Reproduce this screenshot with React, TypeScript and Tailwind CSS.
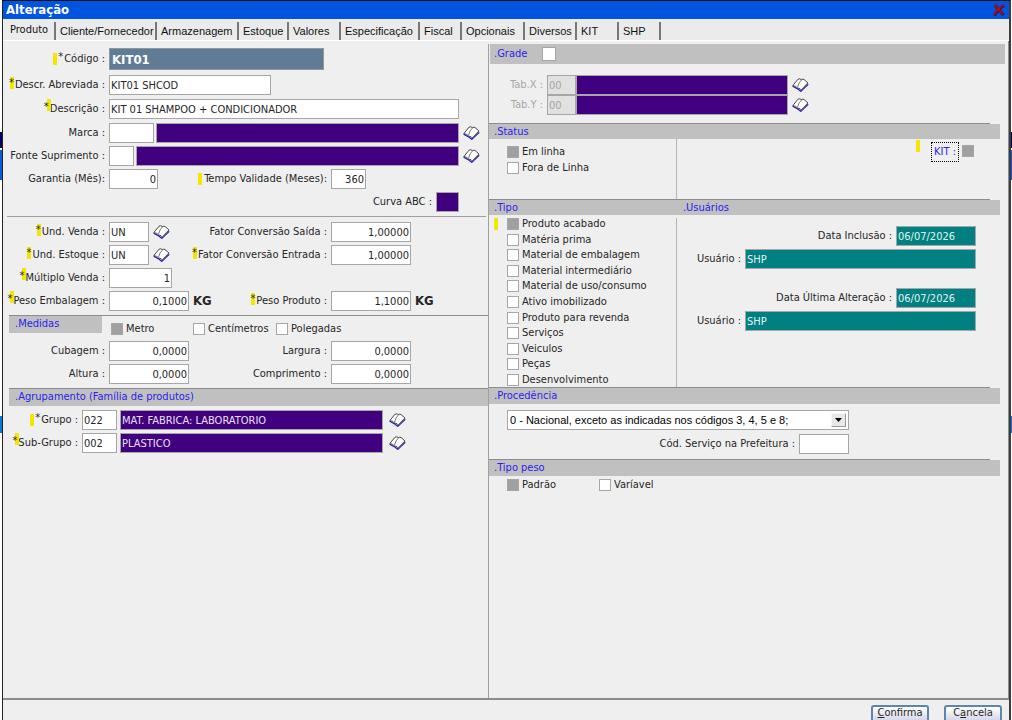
import { ReactNode, useState } from "react";
import clsx from "clsx";

const tabs = [
  { name: "Produto", width: "w-[53px]" },
  { name: "Cliente/Fornecedor", width: "w-[101px]" },
  { name: "Armazenagem", width: "w-[82px]" },
  { name: "Estoque", width: "w-[50px]" },
  { name: "Valores", width: "w-[52px]" },
  { name: "Especificação", width: "w-[79px]" },
  { name: "Fiscal", width: "w-[42px]" },
  { name: "Opcionais", width: "w-[63px]" },
  { name: "Diversos", width: "w-[52px]" },
  { name: "KIT", width: "w-[42px]" },
  { name: "SHP", width: "w-[42px]" },
];

const tipos = [
  "Produto acabado",
  "Matéria prima",
  "Material de embalagem",
  "Material intermediário",
  "Material de uso/consumo",
  "Ativo imobilizado",
  "Produto para revenda",
  "Serviços",
  "Veiculos",
  "Peças",
  "Desenvolvimento",
];

// required mark: asterisk plus a yellow highlight before, under or after it
const Star = ({ mark }: { mark: "before" | "under" | "after" }) => (
  <span className="relative inline-flex h-5 w-[7px] justify-center">
    <span
      className={clsx(
        "absolute h-3 w-1 bg-[#f5e600]",
        mark === "before" && "top-1 -left-1",
        mark === "under" && "top-0.5 left-0.5",
        mark === "after" && "top-0 left-1"
      )}
    />
    <span className="relative">*</span>
  </span>
);

const Label = ({
  id,
  children,
  className = "",
}: {
  id: string;
  children: ReactNode;
  className?: string;
}) => (
  <label
    htmlFor={id}
    className={clsx(
      "flex items-center justify-end whitespace-nowrap",
      className
    )}
  >
    {children}
  </label>
);

const Field = ({
  id,
  value = "",
  className = "",
  label,
}: {
  id: string;
  value?: string;
  className?: string;
  label?: string;
}) => (
  <input
    id={id}
    type="text"
    defaultValue={value}
    aria-label={label}
    className={clsx(
      "h-5 shrink-0 border border-[#a6a6a6] px-px outline-none",
      className
    )}
  />
);

const Check = ({
  id,
  label,
  checked,
  className = "",
}: {
  id: string;
  label: string;
  checked?: boolean;
  className?: string;
}) => (
  <div className={clsx("flex h-3 items-center gap-[3px]", className)}>
    <input
      id={id}
      type="checkbox"
      defaultChecked={checked}
      className="size-3 shrink-0 appearance-none border border-[#a6a6a6] bg-white checked:bg-[#a0a0a0]"
    />
    <label htmlFor={id} className="whitespace-nowrap">
      {label}
    </label>
  </div>
);

const BookButton = ({
  label,
  className = "",
}: {
  label: string;
  className?: string;
}) => (
  <button
    type="button"
    aria-label={label}
    className={clsx("h-3.5 w-[17px] shrink-0", className)}
  >
    <svg viewBox="0 0 17 14" className="h-3.5 w-[17px]">
      <path d="M.6 8.2 5.8 11 8.8 13.3 16.2 6.2" fill="none" stroke="#2020c8" strokeWidth="1.3" />
      <path
        d="M.8 7.6 6 1.2Q7.4.3 9.6 1.6 10.8.8 12 1.5L16 5 9.3 12Q8.4 10.2 5.6 10 3.6 7.8.8 7.6Z"
        fill="#fff"
        stroke="#333"
        strokeWidth=".9"
      />
      <path d="M9.8 1.6Q6.6 4.4 5.4 9.4" fill="none" stroke="#555" strokeWidth=".8" />
      <path d="M15.8 5.4 9.4 12.2" fill="none" stroke="#666" strokeWidth="1.2" />
    </svg>
  </button>
);

const Section = ({
  title,
  children,
  className = "h-4",
}: {
  title: string;
  children?: ReactNode;
  className?: string;
}) => (
  <div className="mr-2">
    <div className="mr-2.5 h-px bg-[#8c8c8c]" />
    <div
      className={clsx(
        "flex items-center bg-[#c0c0c0] pl-[5px] text-[#2a1ef0]",
        className
      )}
    >
      <h2>{title}</h2>
      {children}
    </div>
  </div>
);

const Row = ({ children }: { children: ReactNode }) => (
  <div className="flex h-5 items-center gap-1">{children}</div>
);

const Middle = ({ children }: { children: ReactNode }) => (
  <div className="flex h-5 w-[218px] shrink-0 items-center">{children}</div>
);

const Left = () => (
  <div className="pt-[7px]">
    <div className="flex items-center gap-1">
      <Label id="codigo" className="w-[102px]">
        <Star mark="before" />
        Código :
      </Label>
      <input
        id="codigo"
        type="text"
        defaultValue="KIT01"
        className="h-[22px] w-[215px] border border-[#8f979f] bg-[#5f7b96] px-0.5 text-[13px] font-bold text-white outline-none"
      />
    </div>
    <div className="mt-[5px] flex flex-col gap-1">
      <Row>
        <Label id="abrev" className="w-[102px]">
          <Star mark="under" />
          Descr. Abreviada :
        </Label>
        <Field id="abrev" value="KIT01 SHCOD" className="w-[162px] bg-white" />
      </Row>
      <Row>
        <Label id="descricao" className="w-[102px]">
          <Star mark="after" />
          Descrição :
        </Label>
        <Field
          id="descricao"
          value="KIT 01 SHAMPOO + CONDICIONADOR"
          className="w-[350px] bg-white"
        />
      </Row>
    </div>
    <div className="mt-1 flex flex-col gap-[3px]">
      <Row>
        <Label id="marca" className="w-[102px]">
          Marca :
        </Label>
        <div className="flex w-[350px] gap-0.5">
          <Field id="marca" className="w-[45px] bg-white" />
          <Field id="marcaNome" label="Nome da marca" className="min-w-0 flex-1 bg-[#400080] text-white" />
        </div>
        <BookButton label="Pesquisar marca" />
      </Row>
      <Row>
        <Label id="fonte" className="w-[102px]">
          Fonte Suprimento :
        </Label>
        <div className="flex w-[350px] gap-0.5">
          <Field id="fonte" className="w-[25px] bg-white" />
          <Field id="fonteNome" label="Nome da fonte" className="min-w-0 flex-1 bg-[#400080] text-white" />
        </div>
        <BookButton label="Pesquisar fonte" />
      </Row>
      <Row>
        <Label id="garantia" className="w-[102px]">
          Garantia (Mês):
        </Label>
        <Middle>
          <Field id="garantia" value="0" className="w-[49px] bg-white text-right" />
          <Label id="validade" className="ml-auto">
            <span className="mr-0.5 h-3 w-1 bg-[#f5e600]" />
            Tempo Validade (Meses):
          </Label>
        </Middle>
        <Field id="validade" value="360" className="w-[35px] bg-white text-right" />
      </Row>
      <div className="flex h-5 w-[456px] items-center justify-end gap-1">
        <Label id="curva">Curva ABC :</Label>
        <Field id="curva" className="w-[23px] bg-[#400080] text-white" />
      </div>
    </div>
    <div className="mt-1 mr-0.5 ml-1 h-px bg-[#a0a0a0]" />
    <div className="mt-[5px] flex flex-col gap-[3px]">
      <Row>
        <Label id="undVenda" className="w-[102px]">
          <Star mark="under" />
          Und. Venda :
        </Label>
        <Middle>
          <Field id="undVenda" value="UN" className="w-10 bg-white" />
          <BookButton label="Pesquisar unidade de venda" className="ml-1" />
          <Label id="fatorSaida" className="ml-auto">
            Fator Conversão Saída :
          </Label>
        </Middle>
        <Field id="fatorSaida" value="1,00000" className="w-20 bg-white text-right" />
      </Row>
      <Row>
        <Label id="undEstoque" className="w-[102px]">
          <Star mark="under" />
          Und. Estoque :
        </Label>
        <Middle>
          <Field id="undEstoque" value="UN" className="w-10 bg-white" />
          <BookButton label="Pesquisar unidade de estoque" className="ml-1" />
          <Label id="fatorEntrada" className="ml-auto">
            <Star mark="under" />
            Fator Conversão Entrada :
          </Label>
        </Middle>
        <Field id="fatorEntrada" value="1,00000" className="w-20 bg-white text-right" />
      </Row>
      <Row>
        <Label id="multiplo" className="w-[102px]">
          <Star mark="after" />
          Múltiplo Venda :
        </Label>
        <Field id="multiplo" value="1" className="w-[63px] bg-white text-right" />
      </Row>
      <Row>
        <Label id="pesoEmb" className="w-[102px]">
          <Star mark="after" />
          Peso Embalagem :
        </Label>
        <Middle>
          <Field id="pesoEmb" value="0,1000" className="w-20 bg-white text-right" />
          <b className="ml-1 text-[13px]">KG</b>
          <Label id="pesoProd" className="ml-auto">
            <Star mark="under" />
            Peso Produto :
          </Label>
        </Middle>
        <Field id="pesoProd" value="1,1000" className="w-20 bg-white text-right" />
        <b className="text-[13px]">KG</b>
      </Row>
    </div>
    <div className="mt-1 ml-1.5 h-px bg-[#8c8c8c]" />
    <div className="ml-1.5 flex h-[25px]">
      <h2 className="h-[17px] w-[93px] bg-[#c0c0c0] pl-1.5 leading-4 text-[#2a1ef0]">
        .Medidas
      </h2>
      <div className="ml-[9px] flex pt-[7px]">
        <Check id="metro" label="Metro" checked className="w-[82px]" />
        <Check id="centimetros" label="Centímetros" className="w-[83px]" />
        <Check id="polegadas" label="Polegadas" />
      </div>
    </div>
    <div className="flex flex-col gap-[3px]">
      <Row>
        <Label id="cubagem" className="w-[102px]">
          Cubagem :
        </Label>
        <Middle>
          <Field id="cubagem" value="0,0000" className="w-20 bg-white text-right" />
          <Label id="largura" className="ml-auto">
            Largura :
          </Label>
        </Middle>
        <Field id="largura" value="0,0000" className="w-20 bg-white text-right" />
      </Row>
      <Row>
        <Label id="altura" className="w-[102px]">
          Altura :
        </Label>
        <Middle>
          <Field id="altura" value="0,0000" className="w-20 bg-white text-right" />
          <Label id="comprimento" className="ml-auto">
            Comprimento :
          </Label>
        </Middle>
        <Field id="comprimento" value="0,0000" className="w-20 bg-white text-right" />
      </Row>
    </div>
    <div className="mt-1 ml-1.5 border-t border-[#8c8c8c]">
      <h2 className="h-[17px] bg-[#c0c0c0] pl-1.5 leading-4 text-[#2a1ef0]">
        .Agrupamento (Família de produtos)
      </h2>
    </div>
    <div className="mt-1 flex flex-col gap-[3px]">
      <Row>
        <Label id="grupo" className="w-[75px]">
          <Star mark="before" />
          Grupo :
        </Label>
        <div className="flex w-[301px] gap-[3px]">
          <Field id="grupo" value="022" className="w-[35px] bg-white" />
          <Field
            id="grupoNome"
            label="Nome do grupo"
            value="MAT. FABRICA: LABORATORIO"
            className="min-w-0 flex-1 bg-[#400080] text-[#e8e0f0]"
          />
        </div>
        <BookButton label="Pesquisar grupo" className="ml-0.5" />
      </Row>
      <Row>
        <Label id="subGrupo" className="w-[75px]">
          <Star mark="after" />
          Sub-Grupo :
        </Label>
        <div className="flex w-[301px] gap-[3px]">
          <Field id="subGrupo" value="002" className="w-[35px] bg-white" />
          <Field
            id="subGrupoNome"
            label="Nome do sub-grupo"
            value="PLASTICO"
            className="min-w-0 flex-1 bg-[#400080] text-[#e8e0f0]"
          />
        </div>
        <BookButton label="Pesquisar sub-grupo" className="ml-0.5" />
      </Row>
    </div>
  </div>
);

const Usuario = ({ id, label }: { id: string; label: string }) => (
  <div className="flex flex-col gap-[3px]">
    <div className="flex items-center justify-end gap-1">
      <Label id={id + "Data"}>{label}</Label>
      <Field id={id + "Data"} value="06/07/2026" className="w-20 bg-[#008080] text-[#e0f4f4]" />
    </div>
    <div className="flex items-center justify-end gap-1">
      <Label id={id + "Usuario"}>Usuário :</Label>
      <Field id={id + "Usuario"} value="SHP" className="w-[231px] bg-[#008080] text-[#e0f4f4]" />
    </div>
  </div>
);

const Right = () => (
  <div className="mt-[3px] border-l border-[#a0a0a0]">
    <div className="mr-[3px] ml-px flex h-5 items-center bg-[#c0c0c0] pl-1 text-[#2a1ef0]">
      <label htmlFor="grade" className="w-12">
        .Grade
      </label>
      <input
        id="grade"
        type="checkbox"
        className="size-3.5 appearance-none border border-[#a6a6a6] bg-white checked:bg-[#a0a0a0]"
      />
    </div>
    <div className="mt-[11px] mb-2 text-[#a6a6a6]">
      {["X", "Y"].map((axis) => (
        <div key={axis} className="flex h-5 items-center">
          <Label id={"tab" + axis} className="mr-1 w-[54px]">
            Tab.{axis} :
          </Label>
          <Field id={"tab" + axis} value="00" className="w-[29px] bg-[#e1e1e1]" />
          <Field id={"tabNome" + axis} label={"Nome tabela " + axis} className="w-[212px] bg-[#400080] text-white" />
          <BookButton label={"Pesquisar tabela " + axis} className="ml-1" />
        </div>
      ))}
    </div>

    <Section title=".Status" className="h-[15px]" />
    <div className="mr-8 flex h-[60px]">
      <div className="flex w-[188px] flex-col gap-1 border-r border-[#b4b4b4] pt-[7px] pl-[18px]">
        <Check id="emLinha" label="Em linha" checked />
        <Check id="foraLinha" label="Fora de Linha" />
      </div>
      <div className="flex flex-1 justify-end gap-[3px] pr-0.5">
        <span className="mt-px mr-2 h-3 w-1 bg-[#f5e600]" />
        <label
          htmlFor="kit"
          className="mt-[3px] h-5 border border-dotted border-black px-0.5 leading-[18px] text-[#2a1ef0]"
        >
          KIT :
        </label>
        <input
          id="kit"
          type="checkbox"
          defaultChecked
          className="mt-1.5 size-3 appearance-none border border-[#a6a6a6] bg-white checked:bg-[#a0a0a0]"
        />
      </div>
    </div>

    <Section title=".Tipo" className="h-[15px]">
      <h2 className="ml-[165px]">.Usuários</h2>
    </Section>
    <div className="mr-8 flex pt-[3px]">
      <div className="flex h-[169px] w-[188px] border-r border-[#b4b4b4] pb-px pl-[5px]">
        <span className="h-3 w-1 bg-[#f5e600]" />
        <div className="ml-[9px] flex flex-col justify-between">
          {tipos.map((tipo, i) => (
            <Check key={tipo} id={"tipo" + i} label={tipo} checked={i === 0} />
          ))}
        </div>
      </div>
      <div className="flex flex-1 flex-col gap-[19px] pt-2">
        <Usuario id="inclusao" label="Data Inclusão :" />
        <Usuario id="alteracao" label="Data Última Alteração :" />
      </div>
    </div>

    <Section title=".Procedência" />
    <div className="flex w-[360px] flex-col gap-1 pt-1.5 pb-[5px] pl-[18px]">
      <div className="relative">
        <select
          aria-label="Procedência"
          className="block h-5 w-full appearance-none border border-[#a6a6a6] bg-white pl-0.5 font-['Liberation_Sans',Arial,sans-serif] text-[11px] text-black"
        >
          <option>0 - Nacional, exceto as indicadas nos códigos 3, 4, 5 e 8;</option>
        </select>
        <span className="pointer-events-none absolute top-[3px] right-[3px] flex h-3.5 w-[15px] items-center justify-center border border-[#f8f8f8] border-r-[#999] border-b-[#999] bg-[#e8e8e8]">
          <svg viewBox="0 0 7 4" className="h-1 w-[7px]">
            <path d="M0 0h7L3.5 4z" fill="#000" />
          </svg>
        </span>
      </div>
      <div className="flex justify-end gap-1">
        <Label id="codServico">Cód. Serviço na Prefeitura :</Label>
        <Field id="codServico" className="w-[50px] bg-white" />
      </div>
    </div>

    <Section title=".Tipo peso" />
    <div className="flex pt-[3px] pl-[18px]">
      <Check id="padrao" label="Padrão" checked className="w-[92px]" />
      <Check id="variavel" label="Varíavel" />
    </div>
  </div>
);

const App = () => {
  const [active, setActive] = useState("Produto");

  return (
    <div className="flex h-screen overflow-hidden bg-white font-['DejaVu_Sans_Condensed','DejaVu_Sans',Tahoma,sans-serif] text-[11px] leading-4 text-[#262626]">
      <div className="w-0.5 shrink-0 pt-[132px]">
        <div className="h-4 bg-[#000060]" />
        <div className="mt-0.5 h-[30px] bg-[#0a5ae0]" />
        <div className="mt-[236px] h-[17px] bg-[#0a78d7]" />
      </div>
      <main className="flex min-w-0 flex-1 flex-col border-t border-r-2 border-l border-t-[#111] border-r-[#3c3c3c] border-l-[#222] bg-[#efefef]">
        <header className="flex h-[18px] shrink-0 items-center justify-between bg-[#0054dd] pr-[3px] pl-[3px]">
          <h1 className="text-[13px] font-bold text-white">Alteração</h1>
          <button type="button" aria-label="Fechar">
            <svg viewBox="0 0 14 14" className="size-3.5">
              <path d="M3 2.5 11.5 12M12 2.5Q6 6 2.5 12.5" fill="none" stroke="#25104a" strokeWidth="3" />
              <path d="M2.5 2 11 11.5M11.8 2Q5.5 5.5 2.5 11.5" fill="none" stroke="#a30d1c" strokeWidth="2.2" />
            </svg>
          </button>
        </header>
        <nav className="flex h-[22px] shrink-0 border-b border-white bg-[#ebebeb] pt-[3px] font-['Liberation_Sans',Arial,sans-serif] text-[#111]">
          {tabs.map((tab) => (
            <button
              key={tab.name}
              type="button"
              onClick={() => setActive(tab.name)}
              className={clsx(
                "border-r-2 border-[#777] text-left whitespace-nowrap",
                tab.width,
                active === tab.name
                  ? "pb-1 pl-[7px] font-['DejaVu_Sans_Condensed',Tahoma,sans-serif]"
                  : "pl-1"
              )}
            >
              {tab.name}
            </button>
          ))}
        </nav>
        <div className="grid min-h-0 flex-1 grid-cols-[485px_minmax(0,1fr)] border-r border-b-2 border-[#8c8c8c]">
          <Left />
          <Right />
        </div>
        <footer className="flex h-5 shrink-0 justify-end gap-[15px] pt-[5px] pr-[7px]">
          <button
            type="button"
            className="flex h-[22px] w-[58px] justify-center rounded-[3px] border-2 border-[#5b87ad] bg-gradient-to-b from-white to-[#c8c8e0] leading-3"
          >
            <span>
              <u>C</u>onfirma
            </span>
          </button>
          <button
            type="button"
            className="flex h-[22px] w-[58px] justify-center rounded-[3px] border-2 border-[#5b87ad] bg-gradient-to-b from-white to-[#c8c8e0] leading-3"
          >
            <span>
              C<u>a</u>ncela
            </span>
          </button>
        </footer>
      </main>
      <div className="w-px shrink-0 pt-[132px]">
        <div className="h-4 bg-[#000060]" />
        <div className="mt-0.5 h-[30px] bg-[#0a5ae0]" />
        <div className="mt-[236px] h-[17px] bg-[#0a78d7]" />
      </div>
    </div>
  );
};
export default App;
